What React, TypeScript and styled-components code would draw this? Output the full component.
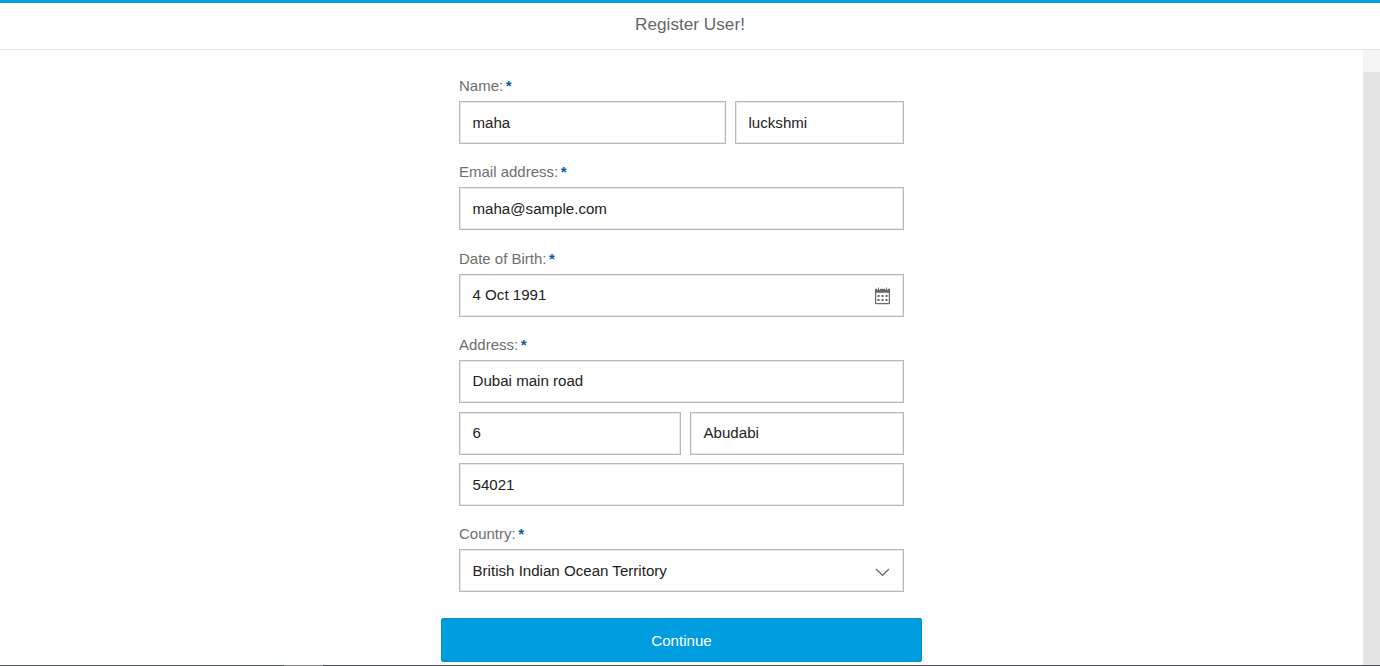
import React from "react";
import styled, { createGlobalStyle } from "styled-components";

const GlobalStyle = createGlobalStyle`
  * { box-sizing: border-box; }
  body {
    margin: 0;
    background: #fff;
    font-family: "Liberation Sans", Arial, sans-serif;
    overflow: hidden;
  }
`;

const Page = styled.div`
  height: 666px;
  display: flex;
  flex-direction: column;
  border-top: 3px solid #009de0;
  overflow: hidden;
`;

const Header = styled.header`
  flex: none;
  height: 47px;
  display: flex;
  justify-content: center;
  border-bottom: 1px solid #e3e3e3;
`;

const Title = styled.h1`
  margin: 0;
  font-weight: 400;
  font-size: 17.2px;
  line-height: 43px;
  color: #666;
`;

const Body = styled.div`
  flex: 1;
  min-height: 0;
  display: flex;
`;

const Content = styled.main`
  flex: 1;
  display: flex;
  flex-direction: column;
  align-items: center;
`;

const ScrollTrack = styled.div`
  width: 17px;
  background: #f5f5f5;
  padding-top: 22px;
  display: flex;
`;

const ScrollThumb = styled.div`
  flex: 1;
  background: #e4e4e4;
`;

const Form = styled.form`
  width: 445px;
  padding-top: 24px;
`;

const Group = styled.section<{ $after: number }>`
  margin-bottom: ${(p) => p.$after}px;
`;

const Label = styled.label`
  display: block;
  height: 27px;
  font-size: 15px;
  line-height: 24px;
  color: #6e6e6e;
`;

const Required = styled.span`
  margin-left: 2.5px;
  font-weight: 700;
  color: #0a5aa5;
`;

const Rows = styled.div`
  display: flex;
  flex-direction: column;
`;

const Row = styled.div<{ $before?: number }>`
  display: flex;
  gap: 9px;
  margin-top: ${(p) => p.$before ?? 0}px;
`;

const Field = styled.div<{ $width?: number; $raised?: boolean }>`
  ${(p) => (p.$width ? `width: ${p.$width}px;` : "flex: 1;")}
  height: 43px;
  padding: 0 12px ${(p) => (p.$raised ? 2 : 0)}px 12.5px;
  display: flex;
  align-items: center;
  justify-content: space-between;
  border: 1px solid #b8b8b8;
  box-shadow: inset 0 0 0 1px #e9e9e9;
  background: #fff;
  font-size: 15.1px;
  line-height: 20px;
  color: #222;
`;

const Icon = styled.svg`
  display: block;
  flex: none;
  margin-top: 2px;
`;

const Button = styled.button`
  width: 481px;
  height: 44px;
  padding: 0;
  border: 1px solid #0590ca;
  border-radius: 2px;
  background: #009de0;
  color: #fff;
  font: 15.1px "Liberation Sans", Arial, sans-serif;
`;

const TaskbarEdge = styled.footer`
  flex: none;
  height: 1px;
  background: linear-gradient(90deg, #535a5e 284px, #888c8e 284px, #888c8e 323px, #46525b 323px);
`;

function FieldLabel({ children }: { children: React.ReactNode }) {
  return (
    <Label>
      {children}
      <Required>*</Required>
    </Label>
  );
}

function CalendarIcon() {
  return (
    <Icon width="17" height="18" viewBox="0 0 17 18">
      <path d="M1 1.8h15v4H1z" fill="#666" />
      <path d="M1.6 4v12q0 .6.6.6h12.6q.6 0 .6-.6V4" fill="none" stroke="#6c6c6c" strokeWidth="1.3" />
      <path d="M4.5 0.5v2.4M12.5 0.5v2.4" stroke="#fff" strokeWidth="2.4" />
      <path d="M4.5 0.5v2.8M12.5 0.5v2.8" stroke="#777" strokeWidth="1" />
      <path d="M3.5 8h2v2h-2zM7.5 8h2v2h-2zM11.5 8h2v2h-2zM3.5 12h2v2h-2zM7.5 12h2v2h-2zM11.5 12h2v2h-2z" fill="#666" />
    </Icon>
  );
}

function ChevronIcon() {
  return (
    <Icon width="17" height="12" viewBox="0 0 17 12">
      <path d="M2 3 8.5 9.3 15 3" fill="none" stroke="#6c6c6c" strokeWidth="1.3" />
    </Icon>
  );
}

export default function App() {
  return (
    <>
      <GlobalStyle />
      <Page>
        <Header>
          <Title>Register User!</Title>
        </Header>
        <Body>
          <Content>
            <Form>
              <Group $after={16}>
                <FieldLabel>Name:</FieldLabel>
                <Row>
                  <Field $width={267}>maha</Field>
                  <Field>luckshmi</Field>
                </Row>
              </Group>
              <Group $after={17}>
                <FieldLabel>Email address:</FieldLabel>
                <Row>
                  <Field>maha@sample.com</Field>
                </Row>
              </Group>
              <Group $after={16}>
                <FieldLabel>Date of Birth:</FieldLabel>
                <Row>
                  <Field $raised>
                    4 Oct 1991
                    <CalendarIcon />
                  </Field>
                </Row>
              </Group>
              <Group $after={16}>
                <FieldLabel>Address:</FieldLabel>
                <Rows>
                  <Row>
                    <Field $raised>Dubai main road</Field>
                  </Row>
                  <Row $before={9}>
                    <Field $width={222} $raised>6</Field>
                    <Field $raised>Abudabi</Field>
                  </Row>
                  <Row $before={8}>
                    <Field>54021</Field>
                  </Row>
                </Rows>
              </Group>
              <Group $after={26}>
                <FieldLabel>Country:</FieldLabel>
                <Row>
                  <Field>
                    British Indian Ocean Territory
                    <ChevronIcon />
                  </Field>
                </Row>
              </Group>
            </Form>
            <Button type="button">Continue</Button>
          </Content>
          <ScrollTrack>
            <ScrollThumb />
          </ScrollTrack>
        </Body>
        <TaskbarEdge />
      </Page>
    </>
  );
}
